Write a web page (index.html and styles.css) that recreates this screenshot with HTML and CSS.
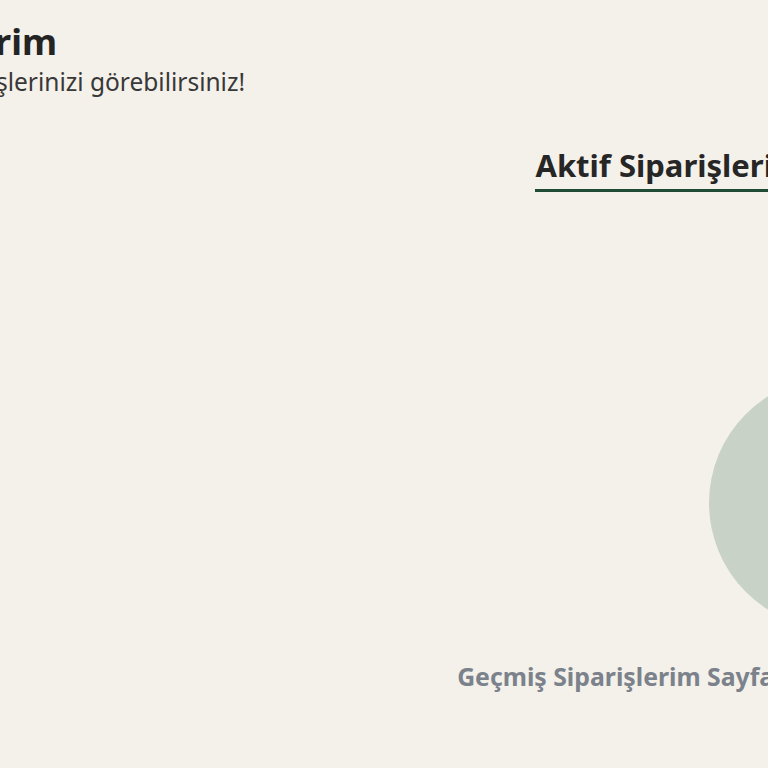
FILE: index.html
```html
<!DOCTYPE html>
<html lang="tr">
<head>
<meta charset="utf-8">
<title>Siparişlerim</title>
<link rel="stylesheet" href="styles.css">
</head>
<body>
<main class="page">
  <header class="page-head">
    <h1 class="page-title">Siparişlerim</h1>
    <p class="page-sub">Burada siparişlerinizi görebilirsiniz!</p>
  </header>
  <section class="orders">
    <nav class="tabs">
      <a class="tab tab-active">Aktif Siparişlerim</a>
      <a class="tab">Geçmiş Siparişlerim</a>
    </nav>
    <div class="empty">
      <div class="empty-art"></div>
      <p class="empty-text">Geçmiş Siparişlerim Sayfasında henüz bir sipariş bulunmuyor.</p>
    </div>
  </section>
</main>
</body>
</html>
```

FILE: styles.css
```css
html, body {
  margin: 0;
  padding: 0;
  background: #f4f0ea;
  overflow: hidden;
}
body {
  font-family: "Noto Sans", "Open Sans", sans-serif;
  color: #2a2a2a;
  width: 768px;
  height: 768px;
}
.page {
  width: 2030px;
  margin-left: -180px;
  display: flex;
  flex-direction: column;
}
.page-head {
  padding: 20px 0 0 23px;
  display: flex;
  flex-direction: column;
  gap: 2px;
}
.page-title {
  margin: 0;
  font-size: 36px;
  line-height: 1.2;
  font-weight: 700;
  color: #242424;
}
.page-sub {
  margin: 0;
  font-size: 24.5px;
  line-height: 1.4;
  color: #383838;
}
.orders {
  display: flex;
  flex-direction: column;
  align-items: center;
  padding-top: 48px;
}
.tabs {
  display: flex;
  gap: 27px;
}
.tab {
  font-size: 31px;
  line-height: 1.2;
  font-weight: 700;
  color: #262626;
  padding-bottom: 4px;
  border-bottom: 3px solid transparent;
}
.tab-active {
  border-bottom-color: #1f4a33;
}
.empty {
  display: flex;
  flex-direction: column;
  align-items: center;
  margin-top: 185px;
  gap: 33px;
}
.empty-art {
  width: 252px;
  height: 252px;
  border-radius: 50%;
  background: #c9d2c7;
}
.empty-text {
  margin: 0;
  font-size: 24.8px;
  line-height: 1.2;
  font-weight: 700;
  color: #7b828b;
  white-space: nowrap;
}
```
